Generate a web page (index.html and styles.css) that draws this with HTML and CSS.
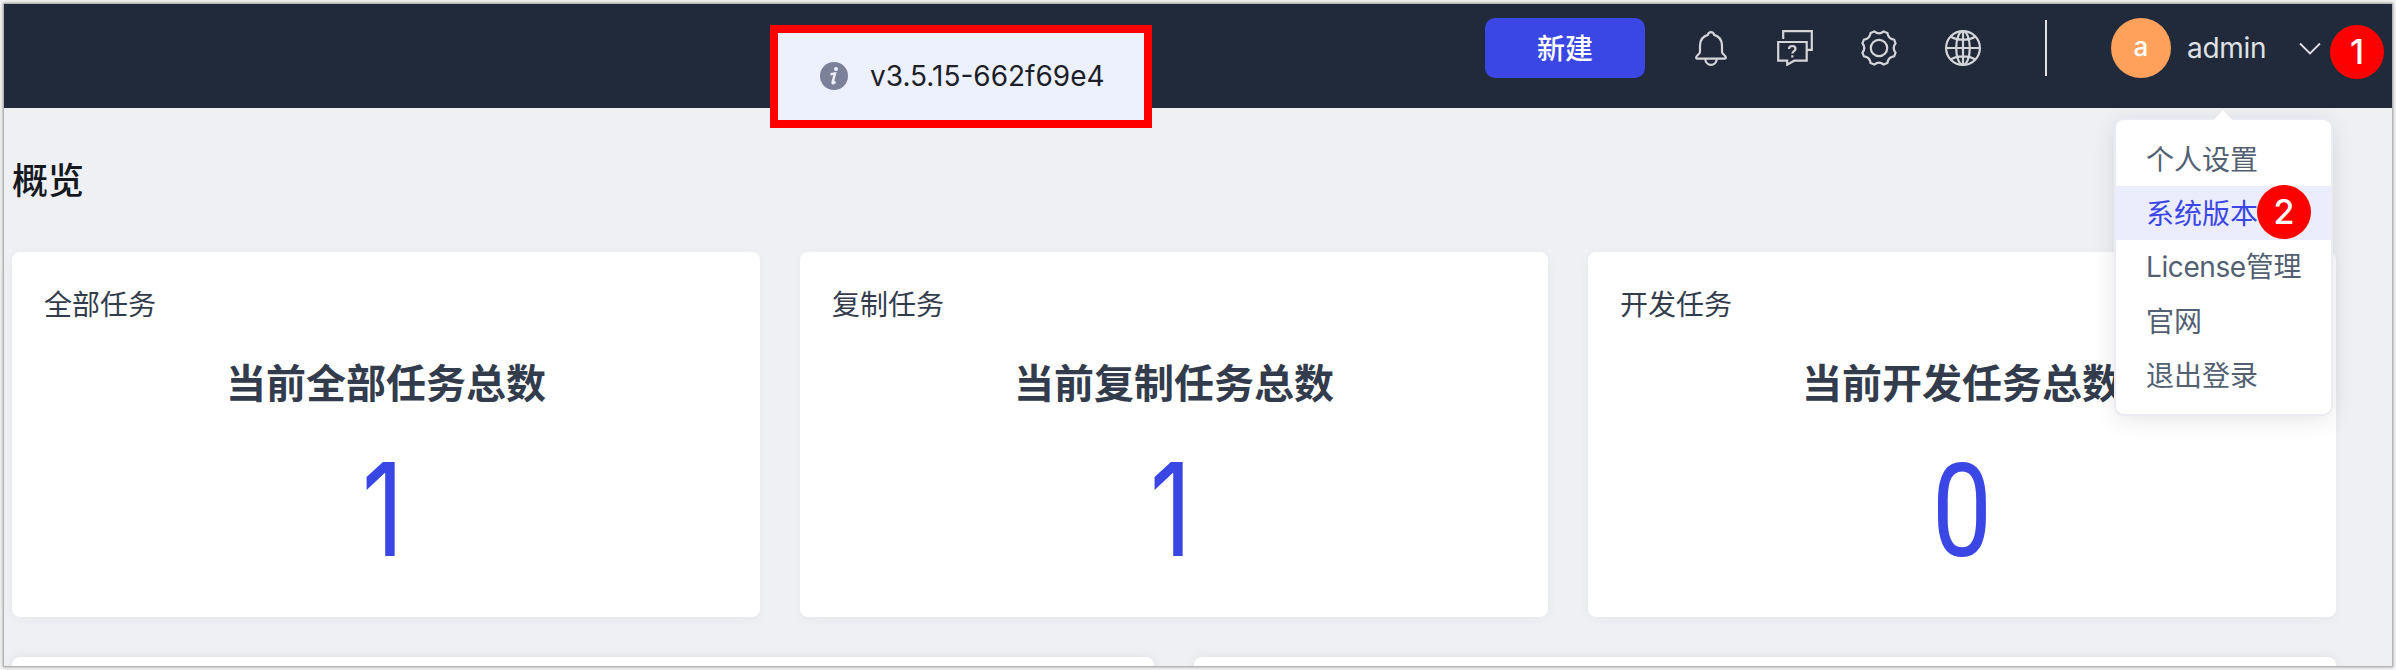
FILE: index.html
```html
<!DOCTYPE html>
<html lang="zh-CN">
<head>
<meta charset="utf-8">
<title>概览</title>
<link rel="stylesheet" href="styles.css">
</head>
<body>
<div class="window">
  <header class="topbar">
    <button class="create">新建</button>
    <nav class="tools">
      <svg class="icon" viewBox="0 0 36 36"><path d="M18 2.200c-1.800 0-2.800 1.200-3.200 2.700C9.500 6.500 7 10.500 7 15.500V22c0 2-3.900 3.500-3.900 5.500 0 .8.400 1.100 1.200 1.100h27.400c.8 0 1.200-.3 1.200-1.100 0-2-3.900-3.500-3.900-5.500v-6.500c0-5-2.500-9-7.800-10.600-.4-1.500-1.400-2.700-3.200-2.700zM12.200 29c.3 3.600 2.800 5.800 5.800 5.800s5.500-2.200 5.800-5.800"/></svg>
      <svg class="icon square" viewBox="0 0 36 36"><path d="M6.200 9V1.100h28.600v18.800h-5"/><path d="M1.200 12h28.500v18.700H17.200l-7 4v-4h-9z"/><path d="M12 19c0-4 6.500-4 6.500 0 0 2-3.200 2.100-3.200 4.600M15.300 25.200v2.200"/></svg>
      <svg class="icon" viewBox="0 0 36 36"><path d="M13.300 1.400Q18 5.200 22.700 1.400L26.400 2.900Q27.100 8.900 33.100 9.600L34.600 13.300Q30.800 18 34.600 22.700L33.100 26.400Q27.100 27.100 26.400 33.100L22.700 34.600Q18 30.800 13.300 34.600L9.600 33.100Q8.900 27.100 2.900 26.400L1.400 22.700Q5.200 18 1.400 13.300L2.900 9.600Q8.900 8.900 9.600 2.900Z"/><circle cx="18" cy="18" r="8.200"/></svg>
      <svg class="icon" viewBox="0 0 36 36"><circle cx="18" cy="18" r="16.900"/><ellipse cx="18" cy="18" rx="6.800" ry="16.900"/><path d="M1 18h34M18 1v34M5.500 6.500c6.500 4.300 18.500 4.300 25 0M5.500 29.500c6.500-4.300 18.500-4.300 25 0"/></svg>
    </nav>
    <i class="divider"></i>
    <div class="user">
      <span class="avatar">a</span>
      <span class="name">admin</span>
      <svg class="chevron" viewBox="0 0 22 13"><path d="M1 1.500l10 10 10-10"/></svg>
    </div>
  </header>
  <main class="content">
    <h1>概览</h1>
    <section class="stats">
      <article class="card"><h3>全部任务</h3><h2>当前全部任务总数</h2><p>1</p></article>
      <article class="card"><h3>复制任务</h3><h2>当前复制任务总数</h2><p>1</p></article>
      <article class="card"><h3>开发任务</h3><h2>当前开发任务总数</h2><p class="zero">0</p></article>
    </section>
    <section class="panels"><div class="panel"></div><div class="panel"></div></section>
  </main>
</div>
<div class="toast">
  <svg viewBox="0 0 28 28"><circle cx="14" cy="14" r="14" fill="#7b8199"/><circle cx="16" cy="7" r="2" fill="#edf1fd"/><path d="M10.500 12.200l4.500-.8-2.400 9c-.3 1.300.7 1.300 2.800-.8" fill="none" stroke="#edf1fd" stroke-width="2.400"/></svg>
  <span>v3.5.15-662f69e4</span>
</div>
<ul class="menu">
  <li>个人设置</li>
  <li class="active">系统版本</li>
  <li class="license">License管理</li>
  <li>官网</li>
  <li>退出登录</li>
</ul>
<span class="marker first">1</span>
<span class="marker second">2</span>
</body>
</html>
```
FILE: styles.css
```css
* { box-sizing: border-box; margin: 0; padding: 0; }
body {
  width: 2396px;
  height: 670px;
  padding: 4px;
  overflow: hidden;
  position: relative;
  background: #f3f3f3;
  font-family: Inter, "Noto Sans CJK SC", sans-serif;
  font-size: 28px;
  color: #333c4d;
}
.window {
  width: 2388px;
  height: 662px;
  overflow: hidden;
  background: #eff0f3;
  box-shadow: 0 0 0 1px #b5b5b5, 0 0 3px 1px #999;
}
.topbar {
  height: 104px;
  padding: 14px 71px 30px 0;
  display: flex;
  justify-content: flex-end;
  align-items: center;
  background: #212a3b;
}
.create {
  width: 160px;
  height: 60px;
  padding-bottom: 2px;
  border: 0;
  border-radius: 10px;
  background: #3b47e5;
  color: #fff;
  font: 500 28px/58px "Noto Sans CJK SC", sans-serif;
}
.tools { display: flex; gap: 48px; margin-left: 48px; }
.icon {
  width: 36px;
  height: 36px;
  fill: none;
  stroke: #d3d5d8;
  stroke-width: 2.2;
  stroke-linejoin: round;
}
.square { stroke-linejoin: miter; }
.divider { width: 2px; height: 56px; margin-left: 64px; background: #dfe1e5; }
.user { display: flex; align-items: center; margin-left: 64px; }
.avatar {
  width: 60px;
  height: 60px;
  border-radius: 50%;
  background: #ffa15a;
  color: #fff;
  text-align: center;
  font-size: 26px;
  font-weight: 500;
  line-height: 58px;
}
.name { width: 112px; margin-left: 16px; color: #dfe1e5; letter-spacing: -.3px; }
.chevron { width: 22px; height: 13px; fill: none; stroke: #dfe1e5; stroke-width: 1.8; }
.content { padding: 42px 56px 0 8px; }
h1 {
  height: 102px;
  font: 500 36px/56px "Noto Sans CJK SC", sans-serif;
  color: #15181f;
}
.stats { display: grid; grid-template-columns: repeat(3, 748px); gap: 40px; }
.card {
  height: 365px;
  padding: 33px 32px 32px;
  border-radius: 8px;
  background: #fff;
  box-shadow: 0 2px 12px rgba(20, 25, 50, .04);
}
h3 { font-size: 28px; font-weight: 400; line-height: 40px; }
h2 { margin-top: 29px; font-size: 40px; line-height: 60px; font-weight: 700; text-align: center; }
.card p {
  margin-top: 18px;
  padding-right: 8px;
  font: 400 129px/154px Inter, sans-serif;
  text-align: center;
  color: #3b47e5;
  transform: scaleX(.8);
}
.card .zero {
  margin-top: 21px;
  padding-right: 0;
  font: 400 130px/154px Roboto, sans-serif;
  transform: scaleX(.82);
}
.panels { display: grid; grid-template-columns: 1fr 1fr; gap: 40px; margin-top: 40px; }
.panel { height: 60px; border-radius: 8px; background: #fff; box-shadow: 0 0 12px rgba(20, 25, 50, .07); }
.toast {
  position: absolute;
  left: 770px;
  top: 25px;
  width: 382px;
  height: 103px;
  padding: 0 0 1px 42px;
  display: flex;
  align-items: center;
  gap: 22px;
  border: 8px solid #f00;
  background: #edf1fd;
  color: #1c1f29;
}
.toast svg { width: 28px; height: 28px; }
.menu {
  position: absolute;
  left: 2116px;
  top: 120px;
  width: 215px;
  height: 294px;
  padding: 12px 0;
  border-radius: 8px;
  background: #fff;
  box-shadow: 0 0 0 2px #ebecf3, 0 4px 24px rgba(0, 0, 0, .12);
  list-style: none;
  color: #535f72;
}
.menu::before {
  content: "";
  position: absolute;
  left: 96px;
  top: -10px;
  border: solid transparent;
  border-width: 0 11px 12px;
  border-bottom-color: #fff;
}
.menu li { height: 54px; padding: 1px 0 0 30px; line-height: 54px; white-space: nowrap; }
.menu .active { background: #ebecfc; color: #3b47e5; }
.menu .license { padding-top: 0; letter-spacing: -.4px; }
.marker {
  position: absolute;
  width: 54px;
  height: 54px;
  border-radius: 50%;
  background: #f00;
  color: #fff;
  text-align: center;
  font-size: 34px;
  font-weight: 500;
  line-height: 53px;
}
.first { left: 2330px; top: 25px; }
.second { left: 2257px; top: 185px; }
```
